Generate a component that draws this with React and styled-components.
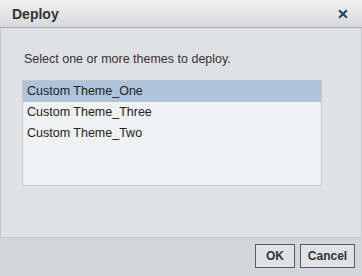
import React, { useState } from "react";
import styled, { createGlobalStyle } from "styled-components";

const GlobalStyle = createGlobalStyle`
  html, body {
    margin: 0;
    padding: 0;
    background: #d2d5d9;
  }
  body {
    font-family: "Liberation Sans", Arial, sans-serif;
  }
`;

const Dialog = styled.div`
  width: 362px;
  height: 276px;
  display: flex;
  flex-direction: column;
  background: #d2d5d9;
  box-sizing: border-box;
`;

const TitleBar = styled.div`
  height: 27px;
  display: flex;
  align-items: center;
  justify-content: space-between;
  padding: 0 12px 0 12px;
  background: linear-gradient(#f1f1f2, #d8d9db);
  border-bottom: 1px solid #a7a9ac;
  flex-shrink: 0;
`;

const Title = styled.div`
  font-size: 14px;
  font-weight: bold;
  color: #333;
`;

const CloseButton = styled.button`
  border: none;
  background: none;
  padding: 0;
  width: 14px;
  height: 14px;
  display: flex;
  align-items: center;
  justify-content: center;
  cursor: pointer;
`;

const Body = styled.div`
  height: 210px;
  box-sizing: border-box;
  background: #e0e1e5;
  border: 1px solid #c4c6ca;
  border-top: none;
  padding: 14px 0 0 21px;
  display: flex;
  flex-direction: column;
`;

const Prompt = styled.div`
  font-size: 12.5px;
  color: #333;
  padding-left: 2px;
  margin-top: 8px;
  height: 30px;
  line-height: 18px;
`;

const ListBox = styled.ul`
  list-style: none;
  margin: 0;
  padding: 0;
  width: 300px;
  height: 106px;
  box-sizing: border-box;
  border: 1px solid #c4c6ca;
  background: #f0f1f3;
`;

const ListItem = styled.li`
  height: 21px;
  line-height: 21px;
  padding-left: 4px;
  font-size: 12.5px;
  color: #222;
  background: ${(p) => (p.$selected ? "#adc4da" : "transparent")};
  cursor: default;
`;

const Footer = styled.div`
  flex: 1;
  display: flex;
  justify-content: flex-end;
  align-items: flex-start;
  gap: 5px;
  padding: 6px 7px 0 0;
`;

const Button = styled.button`
  height: 24px;
  min-width: ${(p) => p.$width}px;
  box-sizing: border-box;
  border: 1px solid #5a5c5f;
  background: #e1e2e5;
  font-family: "Liberation Sans", Arial, sans-serif;
  font-size: 12px;
  font-weight: bold;
  color: #333;
  padding: 0 6px;
  cursor: pointer;
`;

const themes = ["Custom Theme_One", "Custom Theme_Three", "Custom Theme_Two"];

export default function App() {
  const [selected, setSelected] = useState(0);

  return (
    <>
      <GlobalStyle />
      <Dialog>
        <TitleBar>
          <Title>Deploy</Title>
          <CloseButton aria-label="Close">
            <svg width="10" height="10" viewBox="0 0 10 10">
              <path
                d="M1.2 1.2 L8.8 8.8 M8.8 1.2 L1.2 8.8"
                stroke="#1e4a72"
                strokeWidth="2.2"
              />
            </svg>
          </CloseButton>
        </TitleBar>
        <Body>
          <Prompt>Select one or more themes to deploy.</Prompt>
          <ListBox>
            {themes.map((t, i) => (
              <ListItem
                key={t}
                $selected={i === selected}
                onClick={() => setSelected(i)}
              >
                {t}
              </ListItem>
            ))}
          </ListBox>
        </Body>
        <Footer>
          <Button $width={40}>OK</Button>
          <Button $width={55}>Cancel</Button>
        </Footer>
      </Dialog>
    </>
  );
}
